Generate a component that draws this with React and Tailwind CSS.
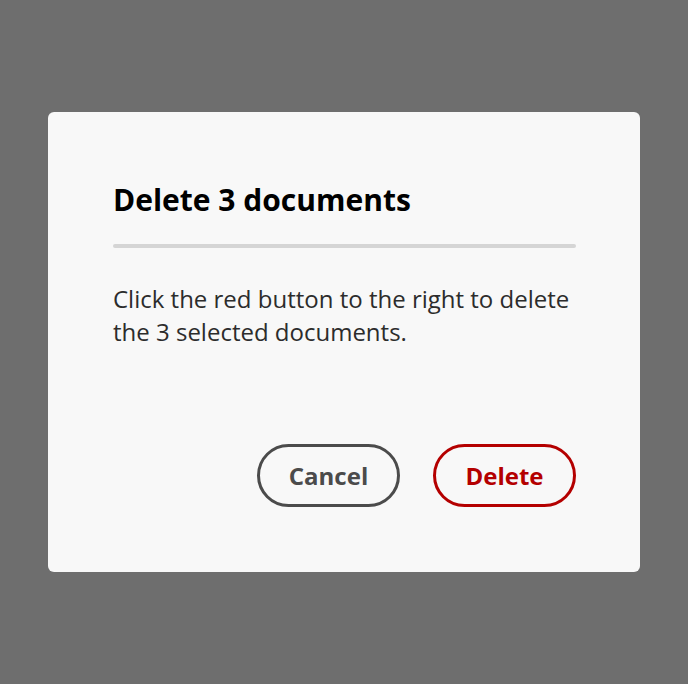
import React from 'react';

const font = { fontFamily: '"Open Sans", "Noto Sans", sans-serif' };

const DeleteDialog = ({ count = 3, onCancel, onDelete }) => {
  const title = `Delete ${count} documents`;
  const message = `Click the red button to the right to delete the ${count} selected documents.`;

  return (
    <div
      role="dialog"
      aria-labelledby="delete-title"
      className="w-[592px] h-[460px] rounded-[6px] bg-[#f8f8f8] flex flex-col pl-[65px] pr-[64px] pt-[68px] pb-[65px]"
    >
      <h2 id="delete-title" className="text-[30px] leading-[40px] font-bold text-black">
        {title}
      </h2>
      <div className="mt-[24px] h-[4px] rounded-full bg-[#d5d5d5]" />
      <p className="mt-[34px] text-[24px] leading-[33px] text-[#2c2c2c]">{message}</p>
      <div className="mt-auto flex justify-end gap-[33px]">
        <button
          type="button"
          onClick={onCancel}
          className="w-[143px] h-[63px] rounded-full border-[3px] border-[#4b4b4b] text-[#4b4b4b] text-[24px] font-bold flex items-center justify-center"
        >
          Cancel
        </button>
        <button
          type="button"
          onClick={onDelete}
          className="w-[143px] h-[63px] rounded-full border-[3px] border-[#b40000] text-[#b40000] text-[24px] font-bold flex items-center justify-center"
        >
          Delete
        </button>
      </div>
    </div>
  );
};

export default function App() {
  return (
    <div style={font} className="w-full h-[684px] bg-[#6e6e6e] flex items-center justify-center">
      <DeleteDialog />
    </div>
  );
}
